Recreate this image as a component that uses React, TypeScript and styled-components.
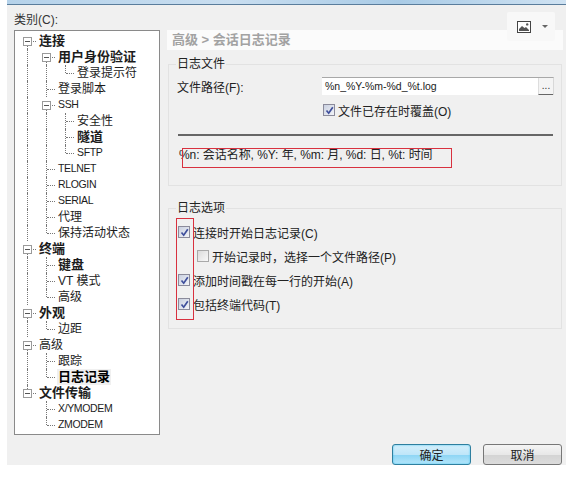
import React from 'react';
import styled, { createGlobalStyle } from 'styled-components';

const FONT = '"Liberation Sans", "Noto Sans CJK SC", sans-serif';

type Cell = ' ' | '|' | 'T' | 'L' | 'B' | 'E';

type TreeItem = {
  label: string;
  cells: Cell[];
  bold?: boolean;
  selected?: boolean;
};

const TREE: TreeItem[] = [
  { label: '连接', cells: ['B'], bold: true },
  { label: '用户身份验证', cells: ['|', 'B'], bold: true },
  { label: '登录提示符', cells: ['|', '|', 'L'] },
  { label: '登录脚本', cells: ['|', 'T'] },
  { label: 'SSH', cells: ['|', 'B'] },
  { label: '安全性', cells: ['|', '|', 'T'] },
  { label: '隧道', cells: ['|', '|', 'T'], bold: true },
  { label: 'SFTP', cells: ['|', '|', 'L'] },
  { label: 'TELNET', cells: ['|', 'T'] },
  { label: 'RLOGIN', cells: ['|', 'T'] },
  { label: 'SERIAL', cells: ['|', 'T'] },
  { label: '代理', cells: ['|', 'T'] },
  { label: '保持活动状态', cells: ['|', 'L'] },
  { label: '终端', cells: ['B'], bold: true },
  { label: '键盘', cells: ['|', 'T'], bold: true },
  { label: 'VT 模式', cells: ['|', 'T'] },
  { label: '高级', cells: ['|', 'L'] },
  { label: '外观', cells: ['B'], bold: true },
  { label: '边距', cells: ['|', 'L'] },
  { label: '高级', cells: ['B'] },
  { label: '跟踪', cells: ['|', 'T'] },
  { label: '日志记录', cells: ['|', 'L'], bold: true, selected: true },
  { label: '文件传输', cells: ['E'], bold: true },
  { label: 'X/YMODEM', cells: [' ', 'T'] },
  { label: 'ZMODEM', cells: [' ', 'L'] },
];

const GlobalStyle = createGlobalStyle`
  html, body {
    margin: 0;
    padding: 0;
    background: #fff;
  }
  body {
    font-family: ${FONT};
    font-size: 12px;
    color: #222;
  }
`;

const Page = styled.div`
  position: relative;
  width: 579px;
  height: 478px;
  padding: 0 13px 0 7px;
  box-sizing: border-box;
  overflow: hidden;
`;

const TitleStrip = styled.div`
  height: 4px;
  background: linear-gradient(90deg, #b5d2ea, #c9def0 40%, #a9cbe6 70%, #cfe2f2);
  border-bottom: 1px solid #5a7d9c;
`;

const Dialog = styled.div`
  height: 460px;
  background: #f0f0f0;
  display: flex;
  flex-direction: column;
  box-sizing: border-box;
`;

const Body = styled.div`
  display: flex;
  gap: 7px;
  padding-left: 7px;
`;

const Side = styled.div`
  width: 146px;
  flex: none;
`;

const SideLabel = styled.div`
  height: 25px;
  line-height: 31px;
  font-size: 12px;
  color: #333;
`;

const Tree = styled.div`
  width: 146px;
  height: 405px;
  box-sizing: border-box;
  background: #fff;
  border: 1px solid #8a8a8a;
  padding: 2px 0 0 3px;
`;

const Row = styled.div`
  display: flex;
  height: 16px;
  align-items: stretch;
`;

const Guide = styled.span<{ $kind: Cell }>`
  position: relative;
  width: 19px;
  flex: none;

  &::before {
    content: '';
    position: absolute;
    left: 9px;
    width: 0;
    border-left: 1px dotted #777;
    display: ${(p) => (p.$kind === ' ' ? 'none' : 'block')};
    top: ${(p) => (p.$kind === 'B' ? '8px' : '0')};
    bottom: ${(p) => (p.$kind === 'L' || p.$kind === 'E' ? '8px' : '0')};
  }

  &::after {
    content: '';
    position: absolute;
    left: 10px;
    top: 8px;
    width: 8px;
    border-top: 1px dotted #777;
    display: ${(p) => (p.$kind === ' ' || p.$kind === '|' ? 'none' : 'block')};
  }
`;

const Expander = styled.span`
  position: absolute;
  z-index: 1;
  left: 5px;
  top: 4px;
  width: 9px;
  height: 9px;
  box-sizing: border-box;
  background: #fff;
  border: 1px solid #9a9a9a;

  &::after {
    content: '';
    position: absolute;
    left: 1px;
    right: 1px;
    top: 3px;
    border-top: 1px solid #555;
  }
`;

const RowLabel = styled.span<{ $bold?: boolean; $selected?: boolean }>`
  font-size: ${(p) => (p.$bold ? '13px' : '12px')};
  font-weight: ${(p) => (p.$bold ? 700 : 400)};
  line-height: 16px;
  padding: 0 1px;
  margin-left: 1px;
  white-space: nowrap;
  color: #1c1c1c;
  background: ${(p) => (p.$selected ? '#f0f0f0' : 'transparent')};
  ${(p) => (p.$selected ? 'color: #000;' : '')}
`;

const LatinLabel = styled(RowLabel)`
  font-size: 10.5px;
  line-height: 14px;
  letter-spacing: -0.35px;
`;

const Main = styled.div`
  width: 396px;
  flex: none;
  padding-top: 25px;
`;

const Heading = styled.div`
  height: 20px;
  line-height: 20px;
  background: #fbfbfb;
  padding-left: 5px;
  font-size: 13px;
  font-weight: 700;
  color: #a2a2a2;
`;

const Group = styled.fieldset<{ $height: number; $gap: number }>`
  margin: ${(p) => p.$gap}px 1px 0 1px;
  padding: 0;
  height: ${(p) => p.$height}px;
  box-sizing: border-box;
  border: 1px solid #e2e2e2;
`;

const GroupTitle = styled.legend`
  margin-left: 7px;
  padding: 0 1px;
  font-size: 12px;
  line-height: 14px;
  color: #222;
`;

const PathRow = styled.div`
  display: flex;
  align-items: center;
  margin-top: 6px;
  padding: 0 7px 0 8px;
`;

const PathLabel = styled.label`
  width: 145px;
  flex: none;
`;

const PathBox = styled.div`
  flex: 1;
  height: 18px;
  display: flex;
  background: #fff;
  border-top: 1px solid #a8a8a8;
  border-right: 1px solid #d8d8d8;
  box-sizing: border-box;
`;

const PathValue = styled.span`
  flex: 1;
  padding-left: 3px;
  font-size: 10.5px;
  line-height: 17px;
  color: #222;
`;

const BrowseButton = styled.button`
  width: 15px;
  padding: 0;
  border: none;
  border-left: 1px solid #ddd;
  border-bottom: 1px solid #666;
  background: #f4f4f4;
  font: 10px ${FONT};
  line-height: 14px;
  color: #333;
`;

const OverwriteRow = styled.div`
  margin-top: 5px;
  padding-left: 154px;
`;

const Separator = styled.div`
  height: 2px;
  margin: 14px 8px 0 9px;
  background: #666;
`;

const Hint = styled.p`
  margin: 11px 0 0 10px;
  font-size: 12px;
  line-height: 16px;
  letter-spacing: -0.05px;
  color: #222;
  white-space: nowrap;
`;

const Options = styled.div`
  display: flex;
  flex-direction: column;
  gap: 4px;
  margin-top: 7px;
  padding-left: 9px;
`;

const Check = styled.div<{ $indent?: boolean }>`
  display: flex;
  align-items: center;
  gap: 3px;
  height: 20px;
  white-space: nowrap;
  padding-left: ${(p) => (p.$indent ? '19px' : '0')};
  font-size: 12px;
  color: #222;
`;

const CheckBox = styled.span<{ $on?: boolean }>`
  width: 12px;
  height: 12px;
  flex: none;
  box-sizing: border-box;
  border: 1px solid ${(p) => (p.$on ? '#8b8b9b' : '#a9a9a9')};
  background: ${(p) =>
    p.$on ? 'linear-gradient(135deg, #c9d0e0, #f3f4f8)' : 'linear-gradient(135deg, #dcdcdc, #f8f8f8)'};
  display: flex;
  align-items: center;
  justify-content: center;
`;

const Footer = styled.div`
  margin-top: auto;
  display: flex;
  justify-content: flex-end;
  gap: 12px;
  padding-right: 4px;
`;

const DialogButton = styled.button<{ $primary?: boolean }>`
  width: 79px;
  height: 21px;
  padding: 0;
  border-radius: 3px;
  font: 12px ${FONT};
  color: #222;
  border: 1px solid ${(p) => (p.$primary ? '#2f7f9f' : '#777')};
  background: ${(p) =>
    p.$primary
      ? 'linear-gradient(180deg, #d4effb 0%, #bfe6f9 50%, #8fd6f5 55%, #b5e6fa 100%)'
      : 'linear-gradient(180deg, #f4f4f4 0%, #e8e8e8 50%, #d4d4d4 55%, #dcdcdc 100%)'};
  box-shadow: ${(p) => (p.$primary ? 'inset 0 0 2px #39c0ee' : 'none')};
`;

const ImageButton = styled.div`
  position: absolute;
  left: 507px;
  top: 12px;
  width: 48px;
  height: 29px;
  background: #f8f8f8;
  border-radius: 2px;
  display: flex;
  align-items: center;
  gap: 11px;
  padding-left: 10px;
  box-sizing: border-box;
`;

const Caret = styled.span`
  width: 0;
  height: 0;
  border-left: 3px solid transparent;
  border-right: 3px solid transparent;
  border-top: 3px solid #666;
`;

const Mark = styled.div<{ $x: number; $y: number; $w: number; $h: number }>`
  position: absolute;
  left: ${(p) => p.$x}px;
  top: ${(p) => p.$y}px;
  width: ${(p) => p.$w}px;
  height: ${(p) => p.$h}px;
  box-sizing: border-box;
  border: 1px solid #d8313f;
  pointer-events: none;
`;

const isLatin = (s: string) => /^[A-Z/]+$/.test(s);

const Tick = () => (
  <svg width="9" height="9" viewBox="0 0 9 9">
    <path d="M1.5 4.5 L3.7 7.2 L7.8 1.2" fill="none" stroke="#3f4f9c" strokeWidth="1.7" />
  </svg>
);

const PictureIcon = () => (
  <svg width="14" height="12" viewBox="0 0 14 12">
    <rect x="0.5" y="0.5" width="13" height="11" fill="#fff" stroke="#444" />
    <path d="M2 10 L2 8 L5 5 L7.5 7 L9 6 L12 9 L12 10 Z" fill="#555" />
    <circle cx="10.2" cy="3.4" r="1.2" fill="#555" />
  </svg>
);

const App = () => {
  const renderTree = () => (
    <Tree>
      {TREE.map((item, i) => {
        const Label = isLatin(item.label) ? LatinLabel : RowLabel;
        return (
          <Row key={i}>
            {item.cells.map((cell, j) => (
              <Guide key={j} $kind={cell}>
                {(cell === 'B' || cell === 'E') && <Expander />}
              </Guide>
            ))}
            <Label $bold={item.bold} $selected={item.selected}>
              {item.label}
            </Label>
          </Row>
        );
      })}
    </Tree>
  );

  return (
    <Page>
      <GlobalStyle />
      <TitleStrip />
      <Dialog>
        <Body>
          <Side>
            <SideLabel>类别(C):</SideLabel>
            {renderTree()}
          </Side>
          <Main>
            <Heading>高级 &gt; 会话日志记录</Heading>
            <Group $height={129} $gap={7}>
              <GroupTitle>日志文件</GroupTitle>
              <PathRow>
                <PathLabel>文件路径(F):</PathLabel>
                <PathBox>
                  <PathValue>%n_%Y-%m-%d_%t.log</PathValue>
                  <BrowseButton>...</BrowseButton>
                </PathBox>
              </PathRow>
              <OverwriteRow>
                <Check>
                  <CheckBox $on>
                    <Tick />
                  </CheckBox>
                  文件已存在时覆盖(O)
                </Check>
              </OverwriteRow>
              <Separator />
              <Hint>%n: 会话名称, %Y: 年, %m: 月, %d: 日, %t: 时间</Hint>
            </Group>
            <Group $height={128} $gap={15}>
              <GroupTitle>日志选项</GroupTitle>
              <Options>
                <Check>
                  <CheckBox $on>
                    <Tick />
                  </CheckBox>
                  连接时开始日志记录(C)
                </Check>
                <Check $indent>
                  <CheckBox />
                  开始记录时，选择一个文件路径(P)
                </Check>
                <Check>
                  <CheckBox $on>
                    <Tick />
                  </CheckBox>
                  添加时间戳在每一行的开始(A)
                </Check>
                <Check>
                  <CheckBox $on>
                    <Tick />
                  </CheckBox>
                  包括终端代码(T)
                </Check>
              </Options>
            </Group>
          </Main>
        </Body>
        <Footer>
          <DialogButton $primary>确定</DialogButton>
          <DialogButton>取消</DialogButton>
        </Footer>
      </Dialog>
      <ImageButton>
        <PictureIcon />
        <Caret />
      </ImageButton>
      <Mark $x={182} $y={148} $w={270} $h={20} />
      <Mark $x={176} $y={218} $w={18} $h={102} />
    </Page>
  );
};

export default App;
